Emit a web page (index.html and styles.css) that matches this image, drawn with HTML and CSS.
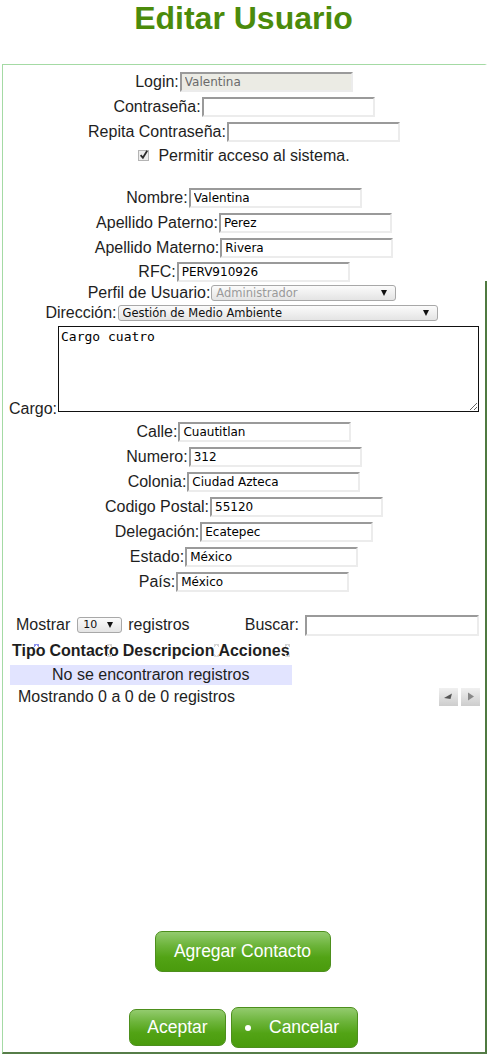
FILE: index.html
```html
<!DOCTYPE html>
<html lang="es">
<head>
<meta charset="utf-8">
<title>Editar Usuario</title>
<link rel="stylesheet" href="styles.css">
</head>
<body>
<h1 class="title">Editar Usuario</h1>
<form class="box">
  <div class="row"><label class="lbl">Login:</label><input class="field field-ro" value="Valentina" readonly></div>
  <div class="row"><label class="lbl">Contraseña:</label><input class="field" type="password"></div>
  <div class="row"><label class="lbl">Repita Contraseña:</label><input class="field" type="password"></div>
  <div class="row row-check">
    <span class="check"><svg width="13" height="13" viewBox="0 0 13 13"><rect x="0.5" y="2.5" width="10" height="10" fill="#ececec" stroke="#b4b4b4"/><path d="M2.6 7.2 L4.9 9.7 L9.2 2.8" fill="none" stroke="#2a2a2a" stroke-width="1.8"/></svg></span>
    <span>Permitir acceso al sistema.</span>
  </div>
  <div class="row row-gap"><label class="lbl">Nombre:</label><input class="field" value="Valentina"></div>
  <div class="row"><label class="lbl">Apellido Paterno:</label><input class="field" value="Perez"></div>
  <div class="row"><label class="lbl">Apellido Materno:</label><input class="field" value="Rivera"></div>
  <div class="row row-rfc"><label class="lbl">RFC:</label><input class="field" value="PERV910926"></div>
  <div class="row row-perfil"><label class="lbl">Perfil de Usuario:</label><span class="sel sel-perfil"><select disabled><option>Administrador</option></select></span></div>
  <div class="row row-dir"><label class="lbl">Dirección:</label><span class="sel sel-dir"><select><option>Gestión de Medio Ambiente</option></select></span></div>
  <div class="row-cargo"><label class="lbl lbl-cargo">Cargo:</label><textarea class="cargo">Cargo cuatro</textarea></div>
  <div class="row row-calle"><label class="lbl">Calle:</label><input class="field" value="Cuautitlan"></div>
  <div class="row"><label class="lbl">Numero:</label><input class="field" value="312"></div>
  <div class="row"><label class="lbl">Colonia:</label><input class="field" value="Ciudad Azteca"></div>
  <div class="row"><label class="lbl">Codigo Postal:</label><input class="field" value="55120"></div>
  <div class="row"><label class="lbl">Delegación:</label><input class="field" value="Ecatepec"></div>
  <div class="row"><label class="lbl">Estado:</label><input class="field" value="México"></div>
  <div class="row"><label class="lbl">País:</label><input class="field" value="México"></div>

  <div class="dt">
    <div class="dt-top">
      <div class="dt-len">Mostrar<span class="sel sel-len"><select><option>10</option></select></span><span class="dt-len-txt">registros</span></div>
      <div class="dt-search">Buscar:<input class="field field-search"></div>
    </div>
    <table class="dt-table">
      <thead>
        <tr>
          <th>Tipo<i class="sort sort-asc s1"></i></th>
          <th>Contacto<i class="sort s2"></i></th>
          <th>Descripcion<i class="sort s3"></i></th>
          <th>Acciones<i class="sort s4"></i></th>
        </tr>
      </thead>
      <tbody>
        <tr><td colspan="4" class="empty">No se encontraron registros</td></tr>
      </tbody>
    </table>
    <div class="dt-bottom">
      <span class="dt-info">Mostrando 0 a 0 de 0 registros</span>
      <span class="pager">
        <button type="button" class="pg"><svg width="11" height="9" viewBox="0 0 11 9"><path d="M1 6 L9 1.5 L7.5 7 Z" fill="#555"/></svg></button>
        <button type="button" class="pg"><svg width="9" height="9" viewBox="0 0 9 9"><path d="M2 0.5 L8 4.5 L2 8.5 Z" fill="#888"/></svg></button>
      </span>
    </div>
  </div>

  <div class="actions actions-add"><button type="button" class="btn btn-add">Agregar Contacto</button></div>
  <div class="actions actions-main">
    <button type="button" class="btn btn-ok">Aceptar</button>
    <button type="button" class="btn btn-cancel"><span class="dot"></span>Cancelar</button>
  </div>
</form>
</body>
</html>
```

FILE: styles.css
```css
html, body {
  margin: 0;
  overflow: hidden;
}
body {
  font-family: "Liberation Sans", Arial, sans-serif;
  font-size: 16px;
  color: #1e1e1e;
  background: #fff;
}
.title {
  margin: 0 0 27px;
  font-size: 32px;
  line-height: 37px;
  text-align: center;
  font-weight: bold;
  color: #4b8b0b;
}
.box {
  margin: 0 0 0 2px;
  border-top: 1px solid #a4daa4;
  border-left: 1px solid #a4daa4;
  border-right: 2px solid transparent;
  border-bottom: 2px solid #567d48;
  padding: 4px 0;
  background: linear-gradient(#4f7a40, #4f7a40) right bottom / 2px calc(100% - 217px) no-repeat;
  background-origin: border-box;
}
.row {
  display: flex;
  justify-content: center;
  align-items: center;
  height: 25px;
}
.lbl {
  margin-right: 1px;
}
.field {
  box-sizing: border-box;
  width: 173px;
  height: 20px;
  margin: 0;
  padding: 0 3px;
  border: 2px solid;
  border-color: #9a9a9a #ececec #ececec #9a9a9a;
  font-family: "DejaVu Sans", sans-serif;
  font-size: 12px;
  color: #000;
  background: #fff;
  outline: none;
}
.field-ro {
  background: #ebebe4;
  color: #6a6a6a;
}
.row-check {
  height: 23px;
  gap: 7px;
}
.check {
  display: flex;
  margin-top: -2px;
}
.row-gap {
  margin-top: 18px;
}
.row-rfc {
  height: 23px;
}
.row-perfil {
  height: 19px;
  padding-right: 4px;
}
.row-dir {
  height: 21px;
  padding-right: 5px;
}
.sel {
  position: relative;
  display: inline-flex;
}
.sel select {
  appearance: none;
  -webkit-appearance: none;
  box-sizing: border-box;
  height: 16px;
  margin: 0;
  padding: 0 0 0 4px;
  border: 1px solid #a8a8a8;
  border-radius: 3px;
  background: linear-gradient(#fbfbfb, #e4e4e4);
  font-family: "DejaVu Sans", sans-serif;
  font-size: 11.5px;
  line-height: 14px;
  color: #111;
  outline: none;
}
.sel::after {
  content: "";
  position: absolute;
  right: 9px;
  top: 5px;
  border-left: 3px solid transparent;
  border-right: 3px solid transparent;
  border-top: 6px solid #111;
  pointer-events: none;
}
.sel-perfil select {
  width: 185px;
  color: #9a9a9a;
  opacity: 1;
}
.sel-dir select {
  width: 320px;
}
.row-cargo {
  display: flex;
  justify-content: center;
  align-items: flex-end;
  margin-top: 3px;
}
.lbl-cargo {
  line-height: 16px;
  margin-bottom: -5px;
}
.cargo {
  display: block;
  box-sizing: border-box;
  width: 421px;
  height: 86px;
  margin: 0;
  padding: 2px;
  border: 1px solid #111;
  font-family: "DejaVu Sans Mono", monospace;
  font-size: 13px;
  color: #000;
  outline: none;
}
.row-calle {
  margin-top: 7px;
}

/* data table */
.dt {
  margin-top: 20px;
}
.dt-top {
  display: flex;
  justify-content: space-between;
  align-items: center;
  height: 22px;
  padding: 0 6px 0 13px;
}
.dt-len {
  display: flex;
  align-items: center;
}
.sel-len {
  margin-left: 7px;
}
.sel-len select {
  width: 45px;
  height: 16px;
  font-size: 11px;
  padding-left: 5px;
}
.sel-len::after {
  right: 9px;
}
.dt-len-txt {
  margin-left: 6px;
}
.dt-search {
  display: flex;
  align-items: center;
}
.field-search {
  width: 174px;
  height: 21px;
  margin-left: 6px;
}
.dt-table {
  margin: 5px 0 0 7px;
  border-collapse: collapse;
  width: 281px;
}
.dt-table th {
  position: relative;
  padding: 0 2px 5px;
  font-weight: bold;
  line-height: 19px;
  text-align: left;
  white-space: nowrap;
}
.sort {
  position: absolute;
  top: 3px;
  width: 5px;
  height: 13px;
  background:
    linear-gradient(to top left, transparent 50%, #d4d4d4 50%) 0 0 / 3px 4px no-repeat,
    linear-gradient(to top right, transparent 50%, #d4d4d4 50%) 2px 0 / 3px 4px no-repeat,
    linear-gradient(to bottom left, transparent 50%, #dcdcdc 50%) 0 9px / 3px 4px no-repeat,
    linear-gradient(to bottom right, transparent 50%, #dcdcdc 50%) 2px 9px / 3px 4px no-repeat;
}
.sort-asc {
  background:
    linear-gradient(to top left, transparent 50%, #8c92ee 50%) 0 0 / 3px 4px no-repeat,
    linear-gradient(to top right, transparent 50%, #8c92ee 50%) 2px 0 / 3px 4px no-repeat;
}
.s1 { left: 24px; }
.s2 { left: 60px; }
.s3 { left: 93px; }
.s4 { left: 69px; }
.empty {
  padding: 0;
  height: 20px;
  line-height: 20px;
  text-align: center;
  background: #e2e4ff;
}
.dt-bottom {
  display: flex;
  justify-content: space-between;
  align-items: center;
  height: 21px;
  margin-top: 1px;
  padding: 0 5px 0 15px;
}
.pager {
  display: flex;
  gap: 3px;
}
.pg {
  display: flex;
  align-items: center;
  justify-content: center;
  width: 19px;
  height: 18px;
  padding: 0;
  border: none;
  background: linear-gradient(#f0f0f0, #cdcdcd);
}

/* buttons */
.actions {
  display: flex;
  justify-content: center;
  align-items: center;
  padding-right: 3px;
}
.actions-add {
  margin-top: 224px;
}
.actions-main {
  margin-top: 35px;
  gap: 5px;
  padding-right: 1px;
}
.btn {
  box-sizing: border-box;
  margin: 0;
  border: 1px solid #4d8f1d;
  border-radius: 7px;
  background: linear-gradient(#93cb6e 0%, #6cb43a 35%, #52a315 65%, #4a9b0d 100%);
  color: #fff;
  font-family: "Liberation Sans", Arial, sans-serif;
  font-size: 17.5px;
}
.btn-add {
  width: 176px;
  height: 41px;
}
.btn-ok {
  width: 97px;
  height: 37px;
}
.btn-cancel {
  display: flex;
  align-items: center;
  width: 127px;
  height: 41px;
  padding: 0 0 0 13px;
}
.dot {
  width: 6px;
  height: 6px;
  border-radius: 50%;
  background: #fff;
  margin-right: 18px;
}
```
